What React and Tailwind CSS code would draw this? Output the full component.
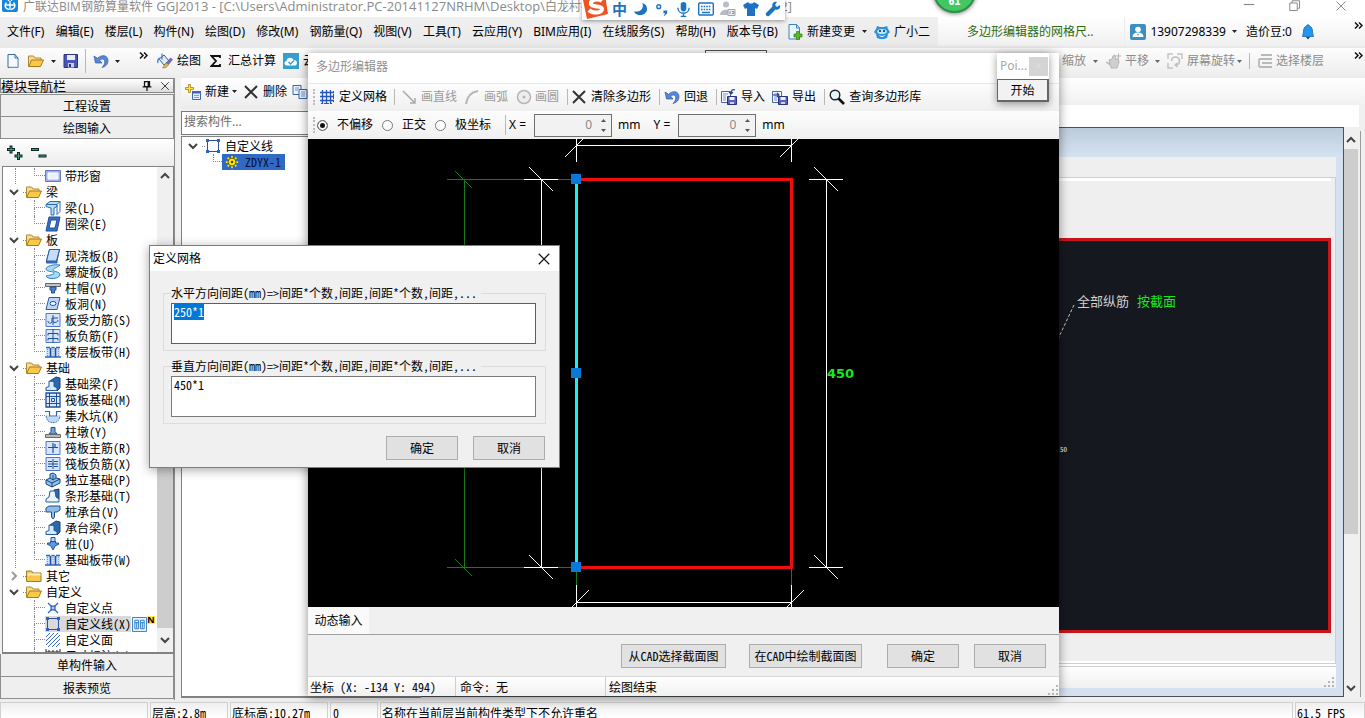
import { useEffect, useRef } from "react";

const UI = "font-['Noto_Sans','Noto_Sans_CJK_SC',sans-serif]";
const MONO = "font-['Noto_Sans_Mono_CJK_SC','Noto_Sans_CJK_SC',monospace]";

const INK = "#1f4f9c";

function Svg({ children, size = 16, className = "" }) {
  return (
    <svg width={size} height={size} viewBox="0 0 16 16" fill="none" className={`shrink-0 ${className}`} aria-hidden="true">
      {children}
    </svg>
  );
}

function Caret({ color = "#222", className = "" }) {
  return (
    <svg width="5" height="3" viewBox="0 0 5 3" className={`mx-px shrink-0 ${className}`} aria-hidden="true">
      <path d="M0 0h5L2.500 3z" fill={color} />
    </svg>
  );
}

function More() {
  return (
    <svg width="9" height="7" viewBox="0 0 9 7" fill="none" stroke="#111" strokeWidth="1.500" className="shrink-0" aria-hidden="true">
      <path d="M1 .5l3 3-3 3M5 .5l3 3-3 3" />
    </svg>
  );
}

function Sep({ className = "" }) {
  return <span className={`w-px shrink-0 self-center bg-[#b8b8b8] ${className}`} />;
}

function Chevron({ dir = "down", color = "#444", size = 10 }) {
  const d = { down: "M1 3l4 4 4-4", up: "M1 7l4-4 4 4", right: "M3 1l4 4-4 4" }[dir];
  return (
    <svg width={size} height={size} viewBox="0 0 10 10" fill="none" stroke={color} strokeWidth="2" aria-hidden="true">
      <path d={d} />
    </svg>
  );
}

const Cross = ({ size = 16, width = 2, color = "#333" }) => (
  <Svg size={size}>
    <path d="M2 2l12 12M14 2L2 14" stroke={color} strokeWidth={width} />
  </Svg>
);

const Undo = () => (
  <Svg>
    <path d="M1 3l1.500 7H9L6.800 7.500C9 5 12 6 11.800 9c-.1 2.200-1.300 4-2.800 5.500C13 13.500 15 11 15 7.500 15 2.500 9 .8 4.500 5.300z" fill="#5b86d6" stroke="#2f58a8" strokeWidth=".7" />
  </Svg>
);

const NewDoc = () => (
  <Svg>
    <path d="M3 1.500h7l3 3.500v9.500H3z" fill="#f4f9ff" stroke="#39679f" />
    <path d="M10 1.500V5h3" stroke="#39679f" />
    <path d="M4 14h8.500V6" stroke="#a9c4e4" />
  </Svg>
);

const NewChange = () => (
  <Svg>
    <path d="M2 .5h7.500l3 3.500v11H2z" fill="#eaf5fd" stroke="#3c83bd" />
    <path d="M9.500.5V4h3" stroke="#3c83bd" />
    <path d="M9.500 7.500h3V10H15v3h-2.500v2.500h-3V13H7v-3h2.500z" fill="#5cb52c" stroke="#2f7f12" strokeWidth=".7" />
  </Svg>
);

const OpenFolder = () => (
  <Svg>
    <path d="M.5 13.500V3h5l1.500 2h6v2" fill="#f9dd83" stroke="#b08830" />
    <path d="M.8 13.500L3.500 7h12l-3 6.500z" fill="#fbc94a" stroke="#a87a1e" />
  </Svg>
);

const ClosedFolder = () => (
  <Svg>
    <path d="M.5 13.500V3h5l1.500 2h8v8.500z" fill="#f8c64d" stroke="#a37a26" />
    <path d="M1.500 6.500h13" stroke="#fdeeb5" strokeWidth="2" />
  </Svg>
);

const Save = () => (
  <Svg>
    <path d="M1 1.500h13.500v13H1z" fill="#4a57b8" stroke="#2a3480" />
    <path d="M4 2h8v5H4z" fill="#e9edfb" />
    <path d="M5 10h6v4.500H5z" fill="#c9cfe6" />
    <path d="M6 11h2v3H6z" fill="#2a3480" />
  </Svg>
);

const Paint = () => (
  <Svg>
    <path d="M2 6l5-4 5 6-5 4z" fill="#dce9f7" stroke="#355f9b" />
    <path d="M5 .5v6" stroke="#355f9b" />
    <path d="M1 10c-1-3 0-4 2-5" stroke="#4f90d8" strokeWidth="1.500" />
    <path d="M13.500 5l2 1.500-4 5-2-1.500z" fill="#7b6fb5" stroke="#4d4588" strokeWidth=".6" />
    <path d="M9.500 10l2 1.500c-1 2.500-3 3.800-6 3.300 1.500-1 1.500-3.800 4-4.800z" fill="#e0b650" stroke="#8f6f20" strokeWidth=".6" />
  </Svg>
);

const CloudCheck = () => (
  <Svg>
    <path d="M0 0h16v16H0z" fill="#33a0cf" />
    <path d="M4 12.500C.5 12 1 8.500 3.500 8 4 4.500 9 3.500 10.500 7c4-.5 4.500 5 1.500 5.500z" fill="#fff" />
    <path d="M5.500 9l2 2L11 7.500" stroke="#33a0cf" strokeWidth="1.400" />
  </Svg>
);

const Mascot = () => (
  <Svg>
    <path d="M2 5l1-3 3 1h4l3-1 1 3 2 3-2 2-1 4-3 1H6l-3-1-1-4-2-2z" fill="#2b93dd" />
    <ellipse cx="8" cy="7.500" rx="4.800" ry="2.600" fill="#bfe4fb" />
    <circle cx="6" cy="7" r="1" fill="#123" />
    <circle cx="10" cy="7" r="1" fill="#123" />
    <path d="M5.500 11.500c1.500 1.300 3.500 1.300 5 0" stroke="#fff" />
  </Svg>
);

const User = () => (
  <Svg>
    <rect width="16" height="16" rx="2" fill="#3c8fc0" />
    <circle cx="8" cy="5.500" r="2.800" fill="#fff" />
    <path d="M2.500 13c0-3 2-4.500 5.500-4.500s5.500 1.500 5.500 4.500z" fill="#fff" />
    <path d="M7 10h2l-1 2z" fill="#3c8fc0" />
  </Svg>
);

const Bell = () => (
  <Svg>
    <path d="M8 .8c1 0 1.500.6 1.500 1.400C12 3 12.500 5 12.500 8c0 2 1 2.500 1 4.500h-11c0-2 1-2.500 1-4.500 0-3 .5-5 3-5.800C6.500 1.400 7 .8 8 .8z" fill="#2196f3" stroke="#1566ad" strokeWidth=".8" />
    <path d="M6 13h4l-2 2.500z" fill="#123c6c" />
  </Svg>
);

const NewItem = () => (
  <Svg>
    <path d="M7.500 7.500h8v8h-8z" fill="#e5effc" stroke="#3a68b4" />
    <path d="M7 7h9v2.500H7z" fill="#3a68b4" />
    <path d="M9 11.500h5M9 13.500h5" stroke="#7ea2dd" />
    <path d="M3.500.5h2v3h3v2h-3v3h-2v-3h-3v-2h3z" fill="#ffe14a" stroke="#a8820c" strokeWidth=".8" />
  </Svg>
);

const Copy = () => (
  <Svg>
    <path d="M1 1.500h8v9H1z" fill="#eef4ff" stroke="#3d62b4" />
    <path d="M7 5.500h8v9H7z" fill="#eef4ff" stroke="#3d62b4" />
    <path d="M3 4h4M3 6h3M9 8h4M9 10h4M9 12h4" stroke="#6f90cf" />
  </Svg>
);

const GridIcon = () => (
  <Svg>
    <path d="M3.500 1v14M7.500 1v14M11.500 1v14M1 3.500h14M1 7.500h14M1 11.500h14" stroke="#2655b8" strokeWidth="1.300" />
    <path d="M14.500 2v12M2 14.500h12" stroke="#2655b8" strokeDasharray="2 1" />
  </Svg>
);

const ImportIcon = ({ out = false }) => (
  <Svg>
    <path d="M.5 2.500h9v11h-9z" fill="#f5f8ff" stroke="#4b66a8" />
    <path d="M2 5h5M2 7h3M2 9h3M2 11h3" stroke="#7d97cf" />
    <path d={out ? "M1 6h6M5 4l2 2-2 2" : "M14 1c-2-1-4 0-4 3M8 3l2 2 2-2"} stroke="#27418c" strokeWidth="1.200" />
    <path d="M6.500 7.500h9v8h-9z" fill="#5a61b5" stroke="#2b327c" />
    <path d="M8.500 8h5v3h-5z" fill="#eef" />
    <path d="M9 13h4v2H9z" fill="#cdd2ee" />
  </Svg>
);

const SearchIcon = () => (
  <Svg>
    <circle cx="6" cy="6" r="4.800" fill="#e6f5fb" stroke="#222" strokeWidth="1.400" />
    <path d="M9.500 9.500L15 15" stroke="#111" strokeWidth="2.600" />
  </Svg>
);

const RectNodes = () => (
  <Svg>
    <path d="M2.500 2.500h11v11h-11z" fill="#fff" stroke="#2a4fa3" />
    <path d="M1 1h3v3H1zM12 1h3v3h-3zM1 12h3v3H1zM12 12h3v3h-3z" fill="#2d62c9" />
  </Svg>
);

const frame = <path d="M1 1.500h14v13H1z" fill="#d7e5fb" stroke="#4a78c8" />;

const ICONS = {
  window: (
    <>
      <path d="M.5 2.500h15v11H.5z" fill="#9fb0ec" stroke="#6a75c0" />
      <path d="M3 5h10v6H3z" fill="#eaf0ff" stroke="#fff" />
    </>
  ),
  beam: (
    <>
      <path d="M1 4.500l4-3h10l-3 3v2L9 8v7H6V8L1 6.500z" fill="#b8dcf8" stroke="#2a6cab" />
      <path d="M12 4.500v10l3-3v-10M1 4.500h11" stroke="#2a6cab" />
    </>
  ),
  ring: (
    <>
      <path d="M4 1h11l-3 14H1z" fill="#3a6fc4" stroke={INK} />
      <path d="M6 4h6l-2 8H4z" fill="#fff" stroke={INK} />
    </>
  ),
  slab: (
    <>
      <path d="M1.500 13l3-11.500h10L12 13v2H1.500z" fill="#3d74c4" stroke="#2b5ca8" />
      <path d="M4.500 1.500h10L11.500 13h-10z" fill="#c6dcfa" stroke="#2b5ca8" />
    </>
  ),
  spiral: <path d="M15 1C9 0 1 2 1 5s8 2 8 4-5 2-8 3c2 4 13 3 14-1 0-4-7-3-7-5s4-2 7-5z" fill="#a5dbf6" stroke="#2c80bd" />,
  cap: (
    <>
      <path d="M.5 3.500h15v3H.5z" fill="#c3c3c3" stroke="#666" />
      <path d="M5 7h6v3H9.500v3h-3v-3H5z" fill="#4e83c8" stroke={INK} />
    </>
  ),
  hole: (
    <>
      <path d="M4 1.500h11l-3 12H1z" fill="#bcd6f8" stroke="#2b5ca8" />
      <ellipse cx="8" cy="7.500" rx="3" ry="2" fill="#fff" stroke={INK} />
    </>
  ),
  rebar: (
    <>
      {frame}
      <path d="M3 9c0 3 4 3 4 0V6h6M8 3v10M8 10c3 1 5 0 5-2" stroke={INK} />
    </>
  ),
  rebar2: (
    <>
      {frame}
      <path d="M8 1v14M3 5.500h10M3 10.500h10M3 5.500v2M13 5.500v2M3 10.500v2M13 10.500v2" stroke={INK} />
    </>
  ),
  strip: (
    <>
      <path d="M1 3h14v10H1z" fill="#cfe2fa" />
      <path d="M1 3.500h4M6.500 3.500h3M11 3.500h4M0 13h16" stroke="#2d68b5" strokeWidth="1.500" />
      <path d="M5.500 4v9M10.500 4v9" stroke={INK} strokeWidth="1.600" />
      <path d="M2.500 5v8M8 5v8M13.500 5v8" stroke="#6c9ad8" strokeDasharray="1 1" />
    </>
  ),
  fbeam: (
    <>
      <path d="M5 5l6-4 4 1v10l-3 3z" fill="#2d68aa" stroke="#173f73" />
      <path d="M1 14.500v-3l3-1V5l5 .5v5l3 1v3z" fill="#d5eafd" stroke="#245a9c" />
    </>
  ),
  raft: (
    <>
      <path d="M1 1h14v14H1z" fill="#dbe9fb" stroke={INK} strokeWidth="1.300" />
      <path d="M4.500 1v14M11.500 1v14M1 4.500h14M1 11.500h14M6.500 6.500h3v3h-3z" stroke={INK} />
    </>
  ),
  pit: (
    <>
      <path d="M1 6c0 5 2 8 7 8s7-3 7-8l-4 3H5z" fill="#bfdaf4" />
      <path d="M0 3.500h4.500V8h7V3.500H16" stroke="#2c62ab" strokeWidth="1.200" />
      <path d="M1 8c1 5 3 6.500 7 6.500s6-1.500 7-6.500" stroke="#3b76b8" strokeDasharray="2 .6" />
    </>
  ),
  pier: (
    <>
      <path d="M6 3.500h4v4l2 2.500H4l2-2.500z" fill="#6da3e2" stroke={INK} />
      <path d="M.5 10.500h15v3H.5z" fill="#b9b9b9" stroke="#6c6c6c" />
    </>
  ),
  cross: (
    <>
      {frame}
      <path d="M8 3v10M3 7.500h10M10 4v3" stroke={INK} strokeWidth="1.200" />
    </>
  ),
  negative: (
    <>
      {frame}
      <path d="M8 3v10M3 5.500h4M9 5.500h4M3 10.500h4M9 10.500h4M3 8h10" stroke={INK} />
    </>
  ),
  single: (
    <>
      <path d="M1 8l4-2V2l3-1 3 2v3l4 1v4l-8 4-6-3z" fill="#8fc0ec" stroke="#16467f" />
      <path d="M5 6l3 2 3-2M8 8V3M1 8l6 3 8-4M7 11v4" stroke="#16467f" />
    </>
  ),
  stripf: (
    <>
      <path d="M9 2l5-1v10l-3 3z" fill="#2d68aa" stroke="#173f73" />
      <path d="M1 14v-3l3-2 1-6h5l1 6 3 2v3z" fill="#eaf4fd" stroke="#245a9c" />
    </>
  ),
  pilecap: <path d="M1 4l3-2h11v4l-3 2H9.500v5L8 15l-1.500-2V8H1z" fill="#8dbce8" stroke="#1d4f8e" />,
  pile: (
    <>
      <path d="M6 1.500h4V6H6z" fill="#b9dbf6" stroke={INK} />
      <path d="M2.500 7h3V5.500h5V7h3v1.500l-3 1L8 14l-2.500-4.500-3-1z" fill="#5f9bdb" stroke={INK} />
    </>
  ),
  point: (
    <>
      <path d="M3 3l10 10M13 3L3 13" stroke="#2d62c9" strokeWidth="1.200" />
      <path d="M6 6h4v4H6z" fill="#9fc0f2" stroke={INK} />
    </>
  ),
  line: (
    <>
      <path d="M2.500 2.500h11v11h-11z" stroke="#2a4fa3" />
      <path d="M1 1h3v3H1zM12 1h3v3h-3zM1 12h3v3H1zM12 12h3v3h-3z" fill="#2d62c9" />
    </>
  ),
  area: <path d="M1 5l4-4M1 9l8-8M1 13l12-12M3 15L15 3M7 15l8-8M11 15l4-4" stroke="#3a68c0" />,
  dim: <path d="M1 1v8M15 1v8M1 4h14M4 2v4M8 2v4M12 2v4" stroke="#222" />,
};

const TREE = [
  { parent: null, items: [["带形窗", "window"]] },
  { parent: "梁", items: [["梁(L)", "beam"], ["圈梁(E)", "ring"]] },
  {
    parent: "板",
    items: [
      ["现浇板(B)", "slab"],
      ["螺旋板(B)", "spiral"],
      ["柱帽(V)", "cap"],
      ["板洞(N)", "hole"],
      ["板受力筋(S)", "rebar"],
      ["板负筋(F)", "rebar2"],
      ["楼层板带(H)", "strip"],
    ],
  },
  {
    parent: "基础",
    items: [
      ["基础梁(F)", "fbeam"],
      ["筏板基础(M)", "raft"],
      ["集水坑(K)", "pit"],
      ["柱墩(Y)", "pier"],
      ["筏板主筋(R)", "cross"],
      ["筏板负筋(X)", "negative"],
      ["独立基础(P)", "single"],
      ["条形基础(T)", "stripf"],
      ["桩承台(V)", "pilecap"],
      ["承台梁(F)", "fbeam"],
      ["桩(U)", "pile"],
      ["基础板带(W)", "strip"],
    ],
  },
  { parent: "其它", closed: true, items: [] },
  {
    parent: "自定义",
    root: true,
    items: [
      ["自定义点", "point"],
      ["自定义线(X)", "line", true],
      ["自定义面", "area"],
      ["尺寸标注(W)", "dim"],
    ],
  },
];

function TreeChild({ label, icon, selected, last, under }) {
  return (
    <li className="flex h-4 items-center">
      <span className="w-3 shrink-0" />
      <span className={`h-4 w-[19px] shrink-0 ${under ? "border-l border-dotted border-[#888]" : ""}`} />
      <span className="flex h-4 w-[11px] shrink-0 flex-col">
        <span className="h-2 border-b border-l border-dotted border-[#888]" />
        <span className={`h-2 ${last ? "" : "border-l border-dotted border-[#888]"}`} />
      </span>
      <button type="button" className={`flex h-4 shrink-0 items-center gap-1 whitespace-nowrap ${selected ? "bg-[#d9d9d9]" : ""}`}>
        <Svg>{ICONS[icon]}</Svg>
        {label}
      </button>
      {selected && (
        <>
          <Svg size={15} className="ml-px">
            <path d="M.5.5h15v15H.5z" fill="#e6f3ff" stroke="#2d7cc4" />
            <path d="M3 3.500h4v9H3zM9 3.500h4v9H9zM3 6h4M9 6h4M5 6v6M11 6v6" stroke="#2d7cc4" />
          </Svg>
          <span className={`w-2 shrink-0 self-start bg-[#ffe84a] text-center text-[9px] leading-[8px] font-bold text-black ${UI}`}>N</span>
        </>
      )}
    </li>
  );
}

function ModulePanel() {
  return (
    <aside className="flex w-[175px] shrink-0 flex-col border-r border-[#8c8c8c] bg-[#f0f0f0]">
      <header className="flex h-[15px] shrink-0 items-center border border-[#8a8a8a] bg-gradient-to-b from-white to-[#dcdcdc]">
        <h2 className="flex-1 text-[13px] leading-[14px]">模块导航栏</h2>
        <button type="button" aria-label="固定" className="mr-2">
          <Svg size={10}>
            <path d="M4 1h8v8H4zM10 1v8M1 9.500h14M8 10v6" stroke="#111" strokeWidth="2" />
          </Svg>
        </button>
        <button type="button" aria-label="关闭面板" className="mr-[3px]">
          <Cross size={10} width={1.5} />
        </button>
      </header>
      <button type="button" className="mt-px h-[23px] shrink-0 border border-[#8f8f8f] bg-[#efefef]">工程设置</button>
      <button type="button" className="h-[22px] shrink-0 border border-t-0 border-[#8f8f8f] bg-[#efefef]">绘图输入</button>
      <div className="flex h-[27px] shrink-0 items-center gap-2 bg-gradient-to-b from-white to-[#ececec] pl-[7px]">
        <button type="button" aria-label="展开全部">
          <Svg>
            <path d="M4 .5v8M0 4.500h8M11.500 7v8M7.500 11h8" stroke="#0c2b28" strokeWidth="3" />
            <path d="M4 1.500v6M1 4.500h6M11.500 8v6M8.500 11h6" stroke="#3f9c84" strokeWidth="1" />
          </Svg>
        </button>
        <button type="button" aria-label="折叠全部">
          <Svg>
            <path d="M0 4.500h8M7.500 11h8" stroke="#0c2b28" strokeWidth="3" />
            <path d="M1 4.500h6M8.500 11h6" stroke="#3f9c84" strokeWidth="1" />
          </Svg>
        </button>
      </div>
      <div className="ml-[2px] flex min-h-0 flex-1 border border-b-2 border-[#828282] bg-white">
        <ul className="min-w-0 flex-1 overflow-hidden pt-px">
          {TREE.map((g, i) => (
            <li key={i}>
              {g.parent && (
                <div className="flex h-4 items-center">
                  <button type="button" aria-label={g.parent} className="ml-[6px] flex w-[14px] shrink-0 justify-start">
                    <Chevron dir={g.closed ? "right" : "down"} color={g.closed ? "#999" : "#444"} />
                  </button>
                  <span className="w-[3px] shrink-0 border-b border-dotted border-[#888]" />
                  <span className="mr-1 flex">{g.closed ? <ClosedFolder /> : <OpenFolder />}</span>
                  {g.parent}
                </div>
              )}
              <ul>
                {g.items.map(([label, icon, selected], j) => (
                  <TreeChild key={label} label={label} icon={icon} selected={selected} last={j === g.items.length - 1} under={!g.root} />
                ))}
              </ul>
            </li>
          ))}
        </ul>
        <div className="flex w-4 shrink-0 flex-col items-center bg-[#f0f0f0]">
          <div className="flex h-[18px] items-center"><Chevron dir="up" /></div>
          <div className="flex-[2]" />
          <div className="w-full flex-[3] bg-[#cdcdcd]" />
          <div className="flex h-6 items-center"><Chevron /></div>
        </div>
      </div>
      <button type="button" className="h-[23px] shrink-0 border border-t-0 border-[#8f8f8f] bg-[#efefef]">单构件输入</button>
      <button type="button" className="mb-px h-[22px] shrink-0 border border-t-0 border-[#8f8f8f] bg-[#efefef]">报表预览</button>
    </aside>
  );
}

function ComponentPanel() {
  return (
    <section className="ml-[6px] flex w-60 shrink-0 flex-col bg-[#f0f0f0]">
      <div className={`flex h-[31px] shrink-0 items-center bg-gradient-to-b from-white to-[#ebebeb] pb-1 pl-1 whitespace-nowrap ${UI}`}>
        <button type="button" className="flex items-center gap-1">
          <NewItem />
          <span className="flex items-center gap-[2px]">新建<Caret /></span>
        </button>
        <button type="button" className="ml-[5px] flex items-center gap-1"><Cross />删除</button>
        <button type="button" aria-label="复制" className="ml-[5px] flex items-center"><Copy /></button>
      </div>
      <input
        aria-label="搜索构件"
        placeholder="搜索构件..."
        className={`mt-[2px] h-6 shrink-0 border border-[#7a7a7a] bg-white px-[2px] pb-[3px] text-[12px] placeholder:text-[#6d6d6d] ${UI}`}
      />
      <ul className="mt-px mb-[2px] flex-1 border border-b-2 border-[#828282] bg-white pt-px">
        <li>
          <div className="flex h-4 items-center pl-[6px]">
            <Chevron />
            <span className="ml-1 w-[3px] border-b border-dotted border-[#888]" />
            <span className="mr-1 flex"><RectNodes /></span>
            自定义线
          </div>
          <ul>
            <li className="flex h-4 pl-[31px]">
              <span className="h-2 w-[9px] border-b border-l border-dotted border-[#888]" />
              <button type="button" className="flex h-4 items-center gap-[6px] bg-[#316ac5] pr-1 pl-[3px] text-[#06123a]">
                <Svg size={14}>
                  <path d="M8 1v14M1 8h14M3 3l10 10M13 3L3 13" stroke="#ffe800" strokeWidth="2" />
                  <circle cx="8" cy="8" r="4.500" fill="#ffe800" stroke="#4d4a10" />
                  <circle cx="8" cy="8" r="1.500" fill="#4d4a10" />
                </Svg>
                ZDYX-1
              </button>
            </li>
          </ul>
        </li>
      </ul>
    </section>
  );
}

function Grip() {
  return (
    <svg width="11" height="11" viewBox="0 0 11 11" fill="#b5b5b5" aria-hidden="true">
      <path d="M8 0h2v2H8zM4 4h2v2H4zM8 4h2v2H8zM0 8h2v2H0zM4 8h2v2H4zM8 8h2v2H8z" />
    </svg>
  );
}

function Workspace() {
  return (
    <main className="flex min-w-0 flex-1 flex-col">
      <div className="h-[27px] shrink-0 bg-gradient-to-b from-white to-[#f1f1f1]" />
      <div className="mr-[6px] h-[22px] shrink-0 bg-white" />
      <div className="mb-[3px] flex min-h-0 flex-1 pr-1">
        <div className="flex min-w-0 flex-1 flex-col border border-[#4d5055] bg-[#d6e1ef] pr-[7px] pb-2">
          <div className="-mr-[7px] h-[29px] shrink-0 bg-gradient-to-b from-[#bccbdb] to-[#d5e3f1]" />
          <div className="h-5 shrink-0 bg-[#efefef]" />
          <div className="flex min-h-0 flex-1 flex-col border-t border-r border-[#cfcfcf] bg-[#efefef] pr-1">
            <div className="h-[3px] shrink-0 bg-white" />
            <div className="h-[57px] shrink-0" />
            <div className="relative flex-1 border-[3px] border-[#c8141c] bg-[#15181f]">
              <svg width="18" height="36" viewBox="0 0 18 36" className="absolute top-[63px] right-[253px]" aria-hidden="true">
                <path d="M17 1L1 35" stroke="#c8c8c8" strokeDasharray="3 2" />
              </svg>
              <p className="absolute top-[50px] right-[152px] flex gap-2 text-[13px] leading-5 whitespace-nowrap text-[#d0d0d0]">
                全部纵筋 <span className="text-[#18e81c]">按截面</span>
              </p>
              <p className="absolute top-[202px] right-[261px] text-[7px] leading-3 text-white">50</p>
            </div>
            <div className="h-7 shrink-0" />
            <div className="-mr-1 h-[2px] shrink-0 bg-white" />
          </div>
          <div className="h-[3px] shrink-0 border-t border-[#cfcfcf] bg-white" />
          <div className="flex h-[22px] shrink-0 items-end justify-end border-t border-[#cfcfcf] bg-gradient-to-b from-white to-[#f0f0f0] pr-px">
            <Grip />
          </div>
        </div>
        <div className="mt-1 flex w-[17px] shrink-0 flex-col items-center border-r border-[#9a9a9a] bg-[#f0f0f0] pr-[2px]">
          <div className="flex h-[18px] items-center"><Chevron dir="up" /></div>
          <div className="w-full flex-[8] bg-[#cdcdcd]" />
          <div className="flex-[3]" />
          <div className="flex h-[18px] items-start pt-1"><Chevron /></div>
        </div>
      </div>
    </main>
  );
}

const MENUS = [
  "文件(F)", "编辑(E)", "楼层(L)", "构件(N)", "绘图(D)", "修改(M)", "钢筋量(Q)", "视图(V)",
  "工具(T)", "云应用(Y)", "BIM应用(I)", "在线服务(S)", "帮助(H)", "版本号(B)",
];

function TopBars() {
  return (
    <div className={`shrink-0 whitespace-nowrap ${UI}`}>
      <header className="flex h-[17px] items-start bg-white font-['Open_Sans','Noto_Sans_CJK_SC',sans-serif] text-[13px] leading-[13px] text-[#8a8a8a]">
        <span className="ml-[2px] flex h-3 items-end overflow-hidden">
          <Svg>
            <rect width="16" height="16" rx="2" fill="#1586dc" />
            <path d="M8 5v9M3 9h10M6.500 5v-2h3v2M4.500 6.500C2 9 3 13 7 13.500M11.500 6.500C14 9 13 13 9 13.500" stroke="#fff" strokeWidth="1.400" />
          </Svg>
        </span>
        <h1 className="ml-[5px] flex w-[769px] justify-between">
          <span><span className="text-[12px]">广联达BIM钢筋算量软件</span> GGJ2013 - [C:\Users\Administrator.PC-20141127NRHM\Desktop\<span className="text-[12px]">白龙村</span>-2</span>
          <span>2]</span>
        </h1>
        <div className="ml-auto flex gap-[34px] pr-[18px]">
          <button type="button" aria-label="最小化"><Svg size={12}><path d="M1 6h14" stroke="#888" strokeWidth="1.500" /></Svg></button>
          <button type="button" aria-label="还原"><Svg size={12}><path d="M1 4h10v10H1zM4 4V1h10v10h-3" stroke="#888" strokeWidth="1.300" /></Svg></button>
          <button type="button" aria-label="关闭"><Cross size={12} width={1.3} color="#888" /></button>
        </div>
      </header>
      <nav className="flex h-[31px] items-center bg-gradient-to-b from-[#f0f0f0] to-[#e9e9e9] pb-[2px]">
        <ul className="flex w-[778px] shrink-0 justify-between pl-[7px]">
          {MENUS.map((m) => <li key={m}><button type="button">{m}</button></li>)}
        </ul>
        <button type="button" className="ml-[9px] flex shrink-0 items-center gap-1"><NewChange />新建变更</button>
        <Caret className="ml-[7px]" />
        <button type="button" className="ml-[6px] flex shrink-0 items-center gap-1"><Mascot />广小二</button>
        <div className="ml-2 flex h-full flex-1 items-center bg-gradient-to-b from-white to-[#f0f0f0]">
          <a href="#news" className="ml-auto text-[#2f6a0a]">多边形编辑器的网格尺..</a>
          <span className="ml-[31px] h-full w-px bg-[#ececec]" />
          <button type="button" className="ml-[5px] flex items-center gap-1"><User />13907298339</button>
          <Caret className="ml-[6px]" />
          <span className="ml-2">造价豆:0</span>
          <button type="button" aria-label="通知" className="mx-2"><Bell /></button>
          <button type="button" aria-label="更多菜单" className="mr-[2px] mb-3 ml-[30px]"><More /></button>
        </div>
      </nav>
      <div className="flex h-[30px] items-center bg-gradient-to-b from-[#fdfdfd] to-[#ececec] pb-1">
        <div className="flex w-[153px] shrink-0 items-center pl-[5px]">
          <button type="button" aria-label="新建"><NewDoc /></button>
          <button type="button" aria-label="打开" className="ml-[7px]"><OpenFolder /></button>
          <Caret className="ml-[7px]" />
          <button type="button" aria-label="保存" className="ml-[6px]"><Save /></button>
          <Sep className="ml-[6px] h-6" />
          <button type="button" aria-label="撤销" className="ml-[7px]"><Undo /></button>
          <Caret className="ml-[6px]" />
          <button type="button" aria-label="更多工具" className="mb-3 ml-auto pr-[5px]"><More /></button>
        </div>
        <div className="flex items-center">
          <button type="button" className="ml-1 flex items-center gap-1"><Paint />绘图</button>
          <button type="button" className="ml-[9px] flex items-center gap-[7px]">
            <svg width="11" height="12" viewBox="0 0 11 12" fill="none" stroke="#111" strokeWidth="1.800" aria-hidden="true"><path d="M10 3V1H1.500L6 6l-4.500 5H10V9" /></svg>
            汇总计算
          </button>
          <button type="button" className="ml-[7px] flex items-center gap-1"><CloudCheck />云</button>
        </div>
        <span className="mt-[2px] ml-[390px] h-[22px] w-[62px] self-start border border-[#555]" />
        <div className="ml-auto flex items-center text-[#8c8c8c]">
          <button type="button">缩放</button>
          <Caret color="#666" className="ml-[7px]" />
          <button type="button" className="ml-[6px] flex items-center gap-1">
            <Svg><path d="M1 9l5 4v2h6l2-6-1-4-2 2-1-5-2 1-1 3-3 1 1 4z" fill="#cfcfcf" stroke="#b5b5b5" /><path d="M11 3h5M13.500.5v5" stroke="#b5b5b5" /></Svg>
            平移
          </button>
          <Caret color="#666" className="ml-[6px]" />
          <button type="button" className="ml-[6px] flex items-center gap-1">
            <Svg><path d="M1 6V1h5M15 6V1h-5M1 10v5h5" stroke="#c4c4c4" strokeWidth="1.500" /><path d="M4.500 8a4 4 0 1 1 4 4l1.500-2M8.500 12l2 2" stroke="#bdbdbd" strokeWidth="1.600" /></Svg>
            屏幕旋转
          </button>
          <Caret color="#666" className="ml-[2px]" />
          <Sep className="ml-[6px] h-4" />
          <button type="button" className="ml-[7px] flex items-center gap-[3px]">
            <Svg><path d="M4 2h11M2 6h4M6 6h9M2 6v8M5 10h10M2 14h13" stroke="#b9b9b9" strokeWidth="1.800" /></Svg>
            选择楼层
          </button>
          <button type="button" aria-label="更多视图工具" className="mr-[2px] mb-3 ml-[30px]"><More /></button>
        </div>
      </div>
    </div>
  );
}

function SpinArrow({ up }) {
  return (
    <svg width="5" height="3" viewBox="0 0 5 3" aria-hidden="true">
      <path d={up ? "M0 3h5L2.500 0z" : "M0 0h5L2.500 3z"} fill="#555" />
    </svg>
  );
}

function NumberBox({ id, label }) {
  return (
    <>
      <label htmlFor={id}>{label} =</label>
      <span className="ml-2 flex h-[23px] w-[78px] items-center border border-[#707070] bg-[#f2f2f2]">
        <input id={id} defaultValue="0" className="w-0 flex-1 bg-transparent pr-1 text-right text-[#8a8a8a]" />
        <span className="flex h-full w-[15px] shrink-0 flex-col items-center justify-between py-1">
          <SpinArrow up />
          <SpinArrow />
        </span>
      </span>
      <span className="ml-[6px]">mm</span>
    </>
  );
}

function Radio({ label, value, checked }) {
  return (
    <label className="flex items-center gap-[9px]">
      <input
        type="radio"
        name="offset"
        value={value}
        defaultChecked={checked}
        className="size-[11px] appearance-none rounded-full border border-[#777] bg-white checked:bg-[#111] checked:shadow-[inset_0_0_0_2px_white]"
      />
      {label}
    </label>
  );
}

const HANDLES = [[571, 174], [571, 368], [571, 562]];

function Drawing() {
  return (
    <div className="h-[468px] shrink-0 overflow-hidden bg-black">
      <svg width="751" height="468" viewBox="308 139 751 468" fill="none" shapeRendering="crispEdges" role="img" aria-label="截面图 450">
        <path d="M447 179.500H576M464.500 179V567M455 171l17 17M447 567.500H576M455 559l17 17M576.500 567v20M791.500 567v20" stroke="#1a7a1a" />
        <path
          d="M524 179.500h34M541.500 179v388M529 167l24 24M524 567.500h34M529 555l24 24
             M809 179.500h34M826.500 179v388M814 167l24 24M809 567.500h34M814 555l24 24
             M576 145.500h215M576.500 139v23M791.500 139v23M565 157l18-18M780 157l18-18
             M576 602.500h215M576.500 585v22M791.500 585v22M589 590l-17 17M804 590l-17 17"
          stroke="#fff"
        />
        <path d="M576 179.500H791.500V567.500H576" stroke="#f00d10" strokeWidth="3" />
        <path d="M576.500 179v388" stroke="#19f0f0" strokeWidth="3" />
        {HANDLES.map(([x, y]) => <rect key={y} x={x} y={y} width="10" height="10" fill="#0a78d8" />)}
        <text x="827" y="378" fill="#18e81c" className="font-['DejaVu_Sans'] text-[13px] font-bold">450</text>
      </svg>
    </div>
  );
}

function PolygonEditor() {
  const btn = "h-6 border border-[#adadad] bg-[#e1e1e1]";
  return (
    <section className="absolute top-[53px] left-[308px] flex w-[751px] flex-col bg-[#f0f0f0] whitespace-nowrap shadow-[0_2px_10px_rgba(0,0,0,0.45)]">
      <h2 className={`h-[30px] bg-white pl-2 leading-7 text-[#8f8f8f] ${UI}`}>多边形编辑器</h2>
      <div className={`flex h-7 items-center border-t border-[#e8e8e8] bg-gradient-to-b from-[#fdfdfd] to-[#efefef] pb-[2px] pl-[5px] ${UI}`}>
        <span className="h-4 border-l-2 border-dotted border-[#bbb]" />
        <button type="button" className="ml-1 flex items-center gap-1"><GridIcon />定义网格</button>
        <Sep className="mx-[7px] h-4" />
        <div className="flex items-center gap-2 text-[#9a9a9a]">
          <button type="button" className="flex items-center gap-[3px]"><Svg><path d="M1 2l12 12M13 9v5H8" stroke="#aaa" strokeWidth="1.500" /></Svg>画直线</button>
          <button type="button" className="flex items-center gap-[3px]"><Svg><path d="M1 15C2 8 6 3 13 2" stroke="#b5b5b5" strokeWidth="2" /></Svg>画弧</button>
          <button type="button" className="flex items-center gap-[3px]"><Svg><circle cx="8" cy="8" r="6.500" fill="#eee" stroke="#b5b5b5" strokeWidth="1.500" /><circle cx="8" cy="8" r="1.500" fill="#b5b5b5" /></Svg>画圆</button>
        </div>
        <Sep className="mr-[3px] ml-2 h-4" />
        <button type="button" className="flex items-center gap-1"><Cross />清除多边形</button>
        <Sep className="mr-1 ml-2 h-4" />
        <button type="button" className="flex items-center gap-1"><Undo />回退</button>
        <Sep className="mr-1 ml-2 h-4" />
        <button type="button" className="flex items-center gap-1"><ImportIcon />导入</button>
        <button type="button" className="ml-[7px] flex items-center gap-1"><ImportIcon out />导出</button>
        <Sep className="mr-1 ml-2 h-4" />
        <button type="button" className="flex items-center gap-1"><SearchIcon />查询多边形库</button>
      </div>
      <form className={`flex h-7 items-center bg-gradient-to-b from-[#fdfdfd] to-[#efefef] pl-[5px] ${UI}`}>
        <span className="mr-[2px] h-4 border-l-2 border-dotted border-[#bbb]" />
        <div className="flex items-center gap-[9px]">
          <Radio label="不偏移" value="none" checked />
          <Radio label="正交" value="ortho" />
          <Radio label="极坐标" value="polar" />
        </div>
        <Sep className="mr-[3px] ml-[14px] h-5" />
        <NumberBox id="dx" label="X" />
        <span className="w-[13px]" />
        <NumberBox id="dy" label="Y" />
      </form>
      <Drawing />
      <div className={`flex h-[27px] ${UI}`}>
        <button type="button" className="w-[61px] bg-[#fafafa] text-center">动态输入</button>
      </div>
      <div className="flex h-[42px] items-center justify-end border-t border-[#a0a0a0] pr-[13px]">
        <button type="button" className={`w-[105px] ${btn}`}>从CAD选择截面图</button>
        <button type="button" className={`ml-[23px] w-[113px] ${btn}`}>在CAD中绘制截面图</button>
        <button type="button" className={`ml-[25px] w-[72px] ${btn}`}>确定</button>
        <button type="button" className={`ml-[15px] w-[72px] ${btn}`}>取消</button>
      </div>
      <footer className="flex h-5 border-t border-[#d8d8d8] bg-gradient-to-b from-white to-[#f0f0f0] leading-5">
        <span className="w-[148px] border-r border-[#cfcfcf] pl-[2px]">坐标 (X: -134 Y: 494)</span>
        <span className="ml-[2px] w-[148px] border-r border-[#cfcfcf] pl-[2px]">命令: 无</span>
        <span className="ml-[2px] flex-1 pl-px">绘图结束</span>
        <span className="self-end"><Grip /></span>
      </footer>
    </section>
  );
}

function SpacingField({ id, legend, value, inputRef, active }) {
  return (
    <fieldset className="min-w-0 border border-[#dcdcdc] pt-[2px] pr-[9px] pb-[6px] pl-[7px]">
      <legend className="pr-1 leading-4"><label htmlFor={id}>{legend}</label></legend>
      <textarea
        id={id}
        ref={inputRef}
        defaultValue={value}
        className={`block h-[41px] w-full resize-none border bg-white px-[2px] py-px leading-[14px] outline-none selection:bg-[#0078d7] selection:text-white ${active ? "border-[#0078d7]" : "border-[#7a7a7a]"}`}
      />
    </fieldset>
  );
}

function GridDialog() {
  const first = useRef(null);
  useEffect(() => {
    first.current.focus();
    first.current.select();
  }, []);
  return (
    <section role="dialog" aria-label="定义网格" className="absolute top-[245px] left-[149px] flex w-[411px] flex-col border border-[#3d8ed4] bg-[#f0f0f0] whitespace-nowrap shadow-[0_2px_10px_rgba(0,0,0,0.35)]">
      <header className={`flex h-[25px] items-center bg-white pr-2 pl-[3px] ${UI}`}>
        <h2 className="flex-1">定义网格</h2>
        <button type="button" aria-label="关闭对话框"><Cross size={14} width={1.4} color="#111" /></button>
      </header>
      <form className="flex flex-col gap-[7px] px-[13px] pt-[14px] pb-[7px]">
        <SpacingField id="hgap" legend="水平方向间距(mm)=>间距*个数,间距,间距*个数,间距,..." value="250*1" inputRef={first} active />
        <SpacingField id="vgap" legend="垂直方向间距(mm)=>间距*个数,间距,间距*个数,间距,..." value="450*1" />
        <div className="mt-[5px] flex justify-end gap-[15px] pr-px">
          <button type="button" className="h-6 w-[72px] border border-[#adadad] bg-[#e1e1e1]">确定</button>
          <button type="button" className="h-6 w-[72px] border border-[#adadad] bg-[#e1e1e1]">取消</button>
        </div>
      </form>
    </section>
  );
}

function ImeBar() {
  return (
    <div className="absolute top-0 left-[582px] flex h-5 w-[203px] items-center bg-white text-[#1d72c4] shadow-[0_1px_4px_rgba(0,0,0,0.4)]">
      <span className="flex h-5 w-[25px] items-end overflow-visible">
        <svg width="27" height="26" viewBox="0 0 27 26" className="shrink-0" aria-hidden="true">
          <path d="M1 6L23 1l3 19-21 5z" fill="#ee5322" />
          <path d="M20 7c-4-3-12-1-11 3s11 1 11 5-9 5-13 1" fill="none" stroke="#fff" strokeWidth="4" />
        </svg>
      </span>
      <div className="flex flex-1 items-center justify-between pr-1 pb-[2px] pl-[5px]">
        <span className={`text-[15px] leading-4 font-bold ${UI}`}>中</span>
        <Svg size={15}><path d="M10 1c2 6-2 10-9 9 3 6 13 5 14-2 .3-3-1.500-6-5-7z" fill="#1d72c4" /></Svg>
        <Svg size={15}><circle cx="4" cy="5" r="2" stroke="#1d72c4" strokeWidth="1.500" /><path d="M9 9h4v3l-3 3-.500-1 1.500-2H9z" fill="#1d72c4" /></Svg>
        <Svg size={15}><rect x="5" y="0" width="6" height="10" rx="3" fill="#1d72c4" /><path d="M2 6c0 8 12 8 12 0M8 12v4M5 15.500h6" stroke="#1d72c4" strokeWidth="1.500" /></Svg>
        <Svg><rect x=".7" y="2" width="14.600" height="12" rx="1" stroke="#1d72c4" strokeWidth="1.400" /><path d="M3 5.500h10M3 8.500h10" stroke="#1d72c4" strokeWidth="1.600" strokeDasharray="1.600 1" /><path d="M4 11.500h8" stroke="#1d72c4" strokeWidth="1.500" /></Svg>
        <Svg><circle cx="6" cy="3.500" r="3" fill="#b9bcc6" /><path d="M0 14c0-7 12-7 12 0z" fill="#b9bcc6" /><path d="M8 8.500h7v6H8z" fill="#eee" stroke="#9fa3b0" /><path d="M10 10v3M12 10.500h2v2h-2" stroke="#8a8fa0" /></Svg>
        <Svg><path d="M5 1c1 2 5 2 6 0l5 3-2 4-2-1v8H4V7L2 8 0 4z" fill="#1d72c4" /></Svg>
        <Svg><path d="M15 4l-3 2-2-2 2-3C9 0 6.500 2.500 7.500 5.500L1 12c-1 2 1 4 3 3l6.500-6.500C13.500 9.500 16 7 15 4z" fill="#1d72c4" /></Svg>
      </div>
    </div>
  );
}

export default function App() {
  return (
    <div className={`relative flex h-screen w-full flex-col overflow-hidden bg-[#f0f0f0] text-[12px] leading-4 text-black ${MONO}`}>
      <TopBars />
      <div className="flex min-h-0 flex-1">
        <ModulePanel />
        <ComponentPanel />
        <Workspace />
      </div>
      <footer className="flex h-[18px] shrink-0 overflow-hidden bg-gradient-to-b from-[#ececec] to-white pt-[2px] leading-5 whitespace-nowrap">
        <span className="h-6 w-[148px] border border-[#d0d0d0]" />
        <span className="ml-[2px] h-6 w-[78px] border border-[#d0d0d0] pl-px">层高:2.8m</span>
        <span className="ml-[2px] h-6 w-[98px] border border-[#d0d0d0] pl-px">底标高:10.27m</span>
        <span className="ml-[2px] h-6 w-12 border border-[#d0d0d0] pl-[2px]">0</span>
        <span className="ml-[2px] h-6 flex-1 border border-[#d0d0d0] pl-px">名称在当前层当前构件类型下不允许重名</span>
        <span className="ml-[2px] h-6 w-[70px] border border-[#d0d0d0] pl-px">61.5 FPS</span>
      </footer>
      <PolygonEditor />
      <GridDialog />
      <section className="absolute top-[53px] left-[997px] w-[52px] bg-white shadow-[0_2px_8px_rgba(0,0,0,0.4)]">
        <header className={`flex h-[26px] items-center justify-between pr-px pl-[3px] text-[#a8a8a8] ${UI}`}>
          Poi...
          <span className="h-[19px] w-[19px] bg-[#d4d4d4] text-center leading-[18px] text-[#e0e0e0]">×</span>
        </header>
        <button type="button" className="h-[23px] w-full border border-r-2 border-b-2 border-[#666] bg-[#f2f2f2]">开始</button>
      </section>
      <ImeBar />
      <div className="absolute -top-[30px] left-[933px] flex size-[43px] items-end justify-center rounded-full border-2 border-[#2f8f46] bg-[#41c860] pb-[3px] text-[12px] font-bold text-white shadow-[0_1px_4px_rgba(0,0,0,0.5)]">
        61
      </div>
    </div>
  );
}
